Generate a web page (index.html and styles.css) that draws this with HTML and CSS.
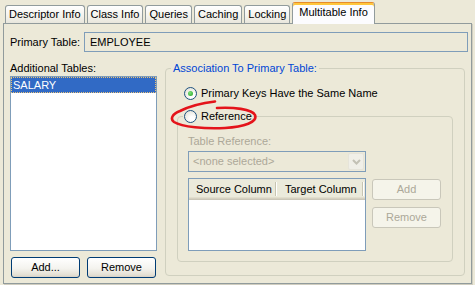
FILE: index.html
```html
<!DOCTYPE html>
<html lang="en">
<head>
  <meta charset="UTF-8">
  <meta name="viewport" content="width=device-width, initial-scale=1.0">
  <title>Multitable Info</title>
  <link rel="stylesheet" href="styles.css">
</head>
<body>
  <nav class="tabs">
    <div class="tab">Descriptor Info</div>
    <div class="tab">Class Info</div>
    <div class="tab">Queries</div>
    <div class="tab">Caching</div>
    <div class="tab">Locking</div>
    <div class="tab active">Multitable Info</div>
  </nav>

  <main class="panel">
    <div class="primary-row">
      <span class="primary-label">Primary Table:</span>
      <div class="field">EMPLOYEE</div>
    </div>

    <div class="columns">
      <section class="tables-col">
        <div class="caption">Additional Tables:</div>
        <ul class="list">
          <li class="selected">SALARY</li>
        </ul>
        <div class="btn-row">
          <button class="btn">Add...</button>
          <button class="btn">Remove</button>
        </div>
      </section>

      <fieldset class="group">
        <legend>Association To Primary Table:</legend>
        <div class="radio-line"><span class="radio checked"></span>Primary Keys Have the Same Name</div>

        <!-- disabled until "Reference" is picked -->
        <fieldset class="sub-group">
          <legend><span class="radio-line"><span class="radio"></span>Reference</span></legend>
          <div class="muted">Table Reference:</div>
          <div class="combo">
            <span class="combo-text">&lt;none selected&gt;</span>
            <span class="combo-btn">
              <svg width="9" height="6" viewBox="0 0 9 6"><path d="M1 1 L4.5 4.5 L8 1" fill="none" stroke="#c3c1b5" stroke-width="2"/></svg>
            </span>
          </div>
          <div class="table-row">
            <div class="grid">
              <div class="grid-head">
                <span class="col col-source">Source Column</span>
                <span class="sep"></span>
                <span class="col col-target">Target Column</span>
                <span class="sep"></span>
              </div>
            </div>
            <div class="side-btns">
              <button class="btn disabled">Add</button>
              <button class="btn disabled">Remove</button>
            </div>
          </div>
        </fieldset>
      </fieldset>
    </div>

    <svg class="marker" width="92" height="32" viewBox="0 0 92 32">
      <path d="M47 8 C63 7 82 9 85 15 C88 22 74 27 55 28 C35 29 12 27 4 22 C0 19 2 14 10 11 C20 6 32 3 45 1.5" fill="none" stroke="#e4141b" stroke-width="2.6" stroke-linecap="round"/>
    </svg>
  </main>
</body>
</html>
```

FILE: styles.css
```css
* {
  box-sizing: border-box;
}

body {
  margin: 0;
  height: 285px;
  overflow: hidden;
  background-color: #ece9d8;
  font-family: "Liberation Sans", Arial, sans-serif;
  font-size: 11px;
  line-height: 13px;
  color: #000;
}

/* tab strip */
.tabs {
  display: flex;
  align-items: flex-end;
  gap: 2px;
  height: 23px;
  padding-left: 5px;
}

.tab {
  height: 18px;
  padding: 2px 3px 0 3px;
  border: 1px solid #919b9c;
  border-bottom: none;
  border-radius: 3px 3px 0 0;
  background: linear-gradient(#ffffff, #f3f2ec 60%, #e8e6dc);
  white-space: nowrap;
}

.tab.active {
  position: relative;
  z-index: 1;
  height: 22px;
  margin-bottom: -1px;
  padding: 3px 6px 0 6px;
  border-top: 1px solid #e68b2c;
  background: #fcfcfe;
  box-shadow: inset 0 2px 0 #ffc73c;
}

/* tab page */
.panel {
  position: relative;
  width: 469px;
  height: 261px;
  margin-left: 3px;
  padding: 8px 3px 0 6px;
  border: 1px solid #919b9c;
  box-shadow: 1px 1px 0 #d0cdbf;
}

.primary-row {
  display: flex;
  align-items: center;
  height: 20px;
}

.primary-label {
  width: 74px;
}

.field {
  flex: 1;
  height: 20px;
  padding: 0 5px;
  border: 1px solid #7f9db9;
  line-height: 18px;
}

.columns {
  display: grid;
  grid-template-columns: 147px 300px;
  column-gap: 8px;
  margin-top: 10px;
}

/* left column */
.list {
  height: 175px;
  margin: 1px 0 0 0;
  padding: 0;
  list-style: none;
  background-color: #fff;
  border: 1px solid #7f9db9;
}

.list li {
  height: 16px;
  padding-left: 1px;
  line-height: 14px;
}

.list li.selected {
  background-color: #316ac5;
  color: #fff;
  border: 1px dotted #e8c27a;
}

.btn-row {
  display: flex;
  gap: 7px;
  margin-top: 6px;
  padding: 0 1px;
}

.btn {
  flex: 1;
  height: 21px;
  padding: 0;
  font: inherit;
  color: #000;
  border: 1px solid #003c74;
  border-radius: 3px;
  background: linear-gradient(#ffffff, #f4f3ee 55%, #e3dfd3 90%, #d6d0c5);
}

.btn.disabled {
  flex: none;
  width: 69px;
  color: #aca899;
  border-color: #c9c7ba;
  background: #f5f4ea;
}

/* group boxes */
.group {
  height: 214px;
  min-width: 0;
  margin: 0;
  padding: 12px 0 0 18px;
  border: 1px solid #d0d0bf;
  border-radius: 4px;
}

.group > legend {
  margin-left: -13px;
  padding: 0 2px;
  color: #0046d5;
}

.radio-line {
  display: flex;
  align-items: center;
  gap: 4px;
  height: 13px;
  white-space: nowrap;
}

.radio {
  position: relative;
  width: 13px;
  height: 13px;
  border: 1px solid #1c5180;
  border-radius: 50%;
  background: radial-gradient(circle at 65% 70%, #ffffff 20%, #e2e0d4 90%);
}

.radio.checked::after {
  content: "";
  position: absolute;
  left: 3px;
  top: 3px;
  width: 5px;
  height: 5px;
  border-radius: 50%;
  background: radial-gradient(circle at 40% 35%, #7ee27b, #21a121);
}

.sub-group {
  width: 276px;
  min-width: 0;
  margin: 10px 0 0 -7px;
  padding: 12px 10px 10px 10px;
  border: 1px solid #d0d0bf;
  border-radius: 4px;
}

.sub-group > legend {
  margin-left: -5px;
  padding: 0 1px;
}

.muted {
  color: #aca899;
}

.combo {
  display: flex;
  align-items: center;
  width: 178px;
  height: 21px;
  margin-top: 3px;
  padding: 1px;
  border: 1px solid #7f9db9;
}

.combo-text {
  flex: 1;
  padding-left: 3px;
  color: #aca899;
}

.combo-btn {
  display: flex;
  align-items: center;
  justify-content: center;
  width: 16px;
  height: 17px;
  border-radius: 2px;
  background: #f0efe8;
  border: 1px solid #e6e4da;
}

.table-row {
  display: flex;
  gap: 6px;
  margin-top: 6px;
}

.grid {
  width: 178px;
  height: 73px;
  background-color: #fff;
  border: 1px solid #7f9db9;
}

.grid-head {
  display: flex;
  height: 21px;
  background: linear-gradient(#ebeadb 0 18px, #e2decd 18px 19px, #d6d2c2 19px 20px, #cbc7b8 20px);
}

.col {
  padding-top: 4px;
  white-space: nowrap;
}

.col-source {
  width: 86px;
  padding-left: 7px;
}

.col-target {
  width: 85px;
  padding-left: 8px;
}

.sep {
  width: 2px;
  height: 14px;
  margin-top: 3px;
  border-left: 1px solid #c7c5b2;
  border-right: 1px solid #ffffff;
}

.side-btns {
  display: flex;
  flex-direction: column;
  gap: 7px;
  margin-top: 1px;
}

/* red annotation round the Reference option */
.marker {
  position: absolute;
  left: 166px;
  top: 76px;
  pointer-events: none;
}
```
